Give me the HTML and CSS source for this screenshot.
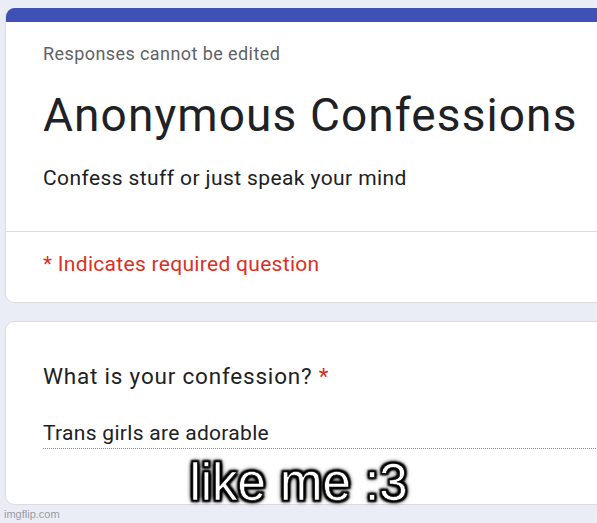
FILE: index.html
```html
<!DOCTYPE html>
<html lang="en">
<head>
    <meta charset="UTF-8">
    <meta name="viewport" content="width=device-width, initial-scale=1.0">
    <title>Anonymous Confessions</title>
    <link rel="stylesheet" href="styles.css">
</head>
<body>

    <div class="form">
        <div class="card card-title">
            <div class="card-bar"></div>
            <div class="card-section">
                <div class="form-note">Responses cannot be edited</div>
                <h1 class="form-title">Anonymous Confessions</h1>
                <div class="form-desc">Confess stuff or just speak your mind</div>
            </div>
            <div class="card-section required-section">
                <div class="required-note">* Indicates required question</div>
            </div>
        </div>

        <div class="card card-question">
            <div class="question-label">What is your confession? <span class="star">*</span></div>
            <div class="answer">Trans girls are adorable</div>
        </div>
    </div>

    <div class="caption">like me :3</div>
    <div class="watermark">imgflip.com</div>

</body>
</html>
```

FILE: styles.css
```css
:root {
    --primary: #3f51b5;
    --background: #ebedf6;
    --text: #202124;
    --text-light: #5f6368;
    --white: #FFFFFF;
    --error: #d93025;
    --border: #dadce0;
}

* {
    margin: 0;
    padding: 0;
    box-sizing: border-box;
    font-family: 'Roboto', sans-serif;
}

body {
    background-color: var(--background);
    color: var(--text);
    width: 597px;
    height: 523px;
    overflow: hidden;
    position: relative;
}

.form {
    display: flex;
    flex-direction: column;
    gap: 18px;
    padding: 8px 0 0 5px;
    margin-right: -40px;
}

.card {
    background: var(--white);
    border: 1px solid var(--border);
    border-radius: 9px;
    overflow: hidden;
}

.card-title {
    border-top: none;
}

.card-bar {
    height: 14px;
    background-color: var(--primary);
}

.card-section {
    padding: 20px 37px 39px;
}

.form-note {
    font-size: 18px;
    line-height: 24px;
    letter-spacing: 0.42px;
    color: var(--text-light);
}

.form-title {
    font-size: 46px;
    line-height: 56px;
    font-weight: 400;
    letter-spacing: 1.1px;
    margin-top: 21px;
}

.form-desc {
    font-size: 21px;
    line-height: 28px;
    letter-spacing: 0.4px;
    margin-top: 21px;
}

.required-section {
    border-top: 1px solid var(--border);
    padding: 18px 37px 24px;
}

.required-note {
    font-size: 21px;
    line-height: 28px;
    letter-spacing: 0.3px;
    color: var(--error);
}

.card-question {
    padding: 40px 0 55px 37px;
}

.question-label {
    font-size: 22.5px;
    line-height: 28px;
    letter-spacing: 0.8px;
}

.star {
    color: var(--error);
}

.answer {
    font-size: 21px;
    line-height: 28px;
    letter-spacing: 0.3px;
    margin-top: 29px;
    padding-bottom: 1px;
    border-bottom: 1px dotted #8a8d91;
}

.caption {
    position: absolute;
    top: 458px;
    left: 0;
    right: 0;
    text-align: center;
    font-family: 'Liberation Sans', Arial, sans-serif;
    font-size: 51px;
    line-height: 50px;
    color: var(--white);
    -webkit-text-stroke: 0.6px #000;
    text-shadow: 0 0 2px #000, 0 0 2px #000, 0 0 3px #000, 0 0 3px #000, 0 0 5px #000, 0 0 6px #000, 2px 2px 2px #000, -2px -2px 2px #000, 2px -2px 2px #000, -2px 2px 2px #000;
}

.watermark {
    position: absolute;
    left: 4px;
    bottom: 3px;
    font-family: 'Liberation Sans', Arial, sans-serif;
    font-size: 11px;
    color: #9a9ca3;
}
```
